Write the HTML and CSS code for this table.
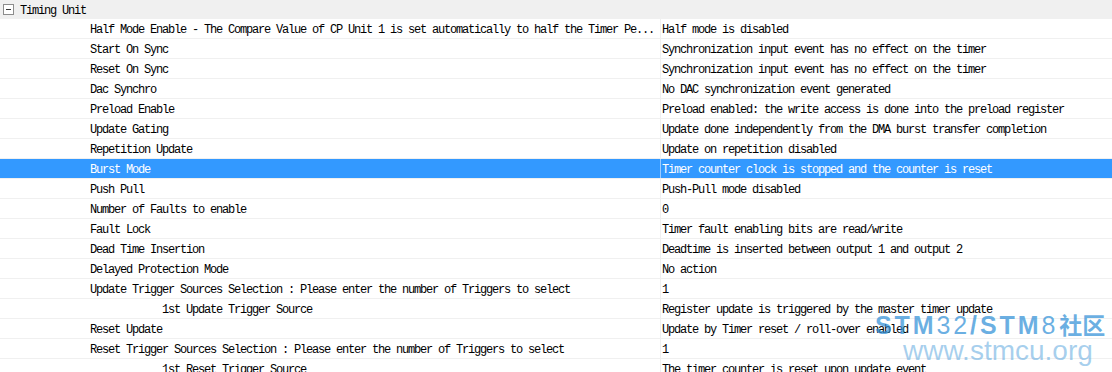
FILE: index.html
```html
<!DOCTYPE html>
<html>
<head>
<meta charset="utf-8">
<link rel="stylesheet" href="styles.css">
</head>
<body>
<div class="tree">
  <div class="group">
    <span class="toggle"><span class="minus"></span></span>
    <span class="group-title">Timing Unit</span>
  </div>
  <div class="row"><div class="label">Half Mode Enable - The Compare Value of CP Unit 1 is set automatically to half the Timer Pe...</div><div class="value">Half mode is disabled</div></div>
  <div class="row"><div class="label">Start On Sync</div><div class="value">Synchronization input event has no effect on the timer</div></div>
  <div class="row"><div class="label">Reset On Sync</div><div class="value">Synchronization input event has no effect on the timer</div></div>
  <div class="row"><div class="label">Dac Synchro</div><div class="value">No DAC synchronization event generated</div></div>
  <div class="row"><div class="label">Preload Enable</div><div class="value">Preload enabled: the write access is done into the preload register</div></div>
  <div class="row"><div class="label">Update Gating</div><div class="value">Update done independently from the DMA burst transfer completion</div></div>
  <div class="row"><div class="label">Repetition Update</div><div class="value">Update on repetition disabled</div></div>
  <div class="row selected"><div class="label">Burst Mode</div><div class="value">Timer counter clock is stopped and the counter is reset</div></div>
  <div class="row"><div class="label">Push Pull</div><div class="value">Push-Pull mode disabled</div></div>
  <div class="row"><div class="label">Number of Faults to enable</div><div class="value">0</div></div>
  <div class="row"><div class="label">Fault Lock</div><div class="value">Timer fault enabling bits are read/write</div></div>
  <div class="row"><div class="label">Dead Time Insertion</div><div class="value">Deadtime is inserted between output 1 and output 2</div></div>
  <div class="row"><div class="label">Delayed Protection Mode</div><div class="value">No action</div></div>
  <div class="row"><div class="label">Update Trigger Sources Selection : Please enter the number of Triggers to select</div><div class="value">1</div></div>
  <div class="row"><div class="label sub">1st Update Trigger Source</div><div class="value">Register update is triggered by the master timer update</div></div>
  <div class="row"><div class="label">Reset Update</div><div class="value">Update by Timer reset / roll-over enabled</div></div>
  <div class="row"><div class="label">Reset Trigger Sources Selection : Please enter the number of Triggers to select</div><div class="value">1</div></div>
  <div class="row"><div class="label sub">1st Reset Trigger Source</div><div class="value">The timer counter is reset upon update event</div></div>
</div>
<div class="watermark">
  <div class="wm-top"><b>STM</b><span class="thin">32</span><b>/STM</b><span class="thin">8</span><b class="cjk">社区</b></div>
  <div class="wm-bottom">www.stmcu.org</div>
</div>
</body>
</html>
```
FILE: styles.css
```css
html, body {
  margin: 0;
  padding: 0;
  background: #ffffff;
  overflow: hidden;
}
body {
  width: 1112px;
  height: 372px;
  position: relative;
  font-family: "Liberation Mono", monospace;
  font-size: 12px;
  letter-spacing: -1.2px;
  color: #000000;
}
.tree {
  display: flex;
  flex-direction: column;
}
.group {
  height: 19px;
  background: #f0f0f0;
  display: flex;
  align-items: center;
  padding-left: 3px;
}
.toggle {
  width: 9px;
  height: 9px;
  border: 1px solid #8c8c8c;
  background: #ffffff;
  display: flex;
  align-items: center;
  justify-content: center;
  margin-right: 6px;
}
.minus {
  width: 5px;
  height: 1px;
  background: #3a3a3a;
}
.group-title {
  line-height: 19px;
  padding-top: 3px;
}
.row {
  display: grid;
  grid-template-columns: 661px 1fr;
  height: 19px;
  border-bottom: 1px solid #f0f0f0;
  white-space: nowrap;
}
.label,
.value {
  padding-top: 3px;
  line-height: 16px;
  overflow: hidden;
}
.label {
  padding-left: 90px;
  border-right: 1px solid #f0f0f0;
}
.label.sub {
  padding-left: 162px;
}
.value {
  padding-left: 1px;
}
.row.selected {
  background: #3399ff;
  color: #ffffff;
}
.row.selected .label {
  border-right-color: #9ccbff;
}
.watermark {
  position: absolute;
  left: 875px;
  top: 311px;
  font-family: "Liberation Sans", Arial, sans-serif;
  pointer-events: none;
}
.wm-top {
  font-size: 25px;
  line-height: 26px;
  letter-spacing: 2.9px;
  color: rgba(50, 145, 215, 0.72);
  white-space: nowrap;
}
.wm-top b {
  font-weight: 700;
}
.wm-top .thin {
  font-weight: 400;
}
.wm-top .cjk {
  font-family: "Noto Sans CJK SC", sans-serif;
  font-size: 23px;
  letter-spacing: 0;
  margin-left: 1px;
}
.wm-bottom {
  font-size: 28px;
  line-height: 26px;
  letter-spacing: 0;
  margin-left: 28px;
  color: rgba(80, 160, 220, 0.5);
  white-space: nowrap;
}
```
